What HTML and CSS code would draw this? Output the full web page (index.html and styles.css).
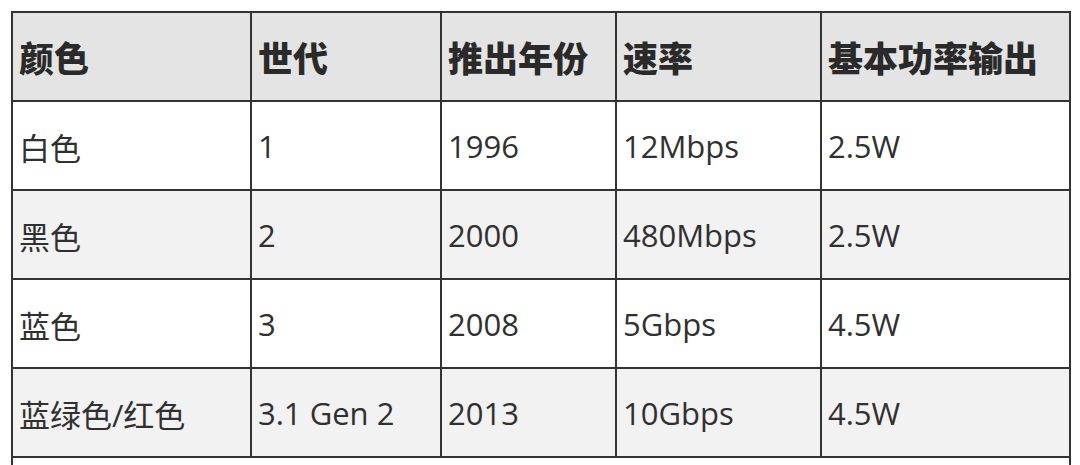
FILE: index.html
```html
<!DOCTYPE html>
<html lang="zh-CN">
<head>
<meta charset="utf-8">
<title>USB</title>
<link rel="stylesheet" href="styles.css">
</head>
<body>
<table class="usb">
  <colgroup>
    <col class="c1"><col class="c2"><col class="c3"><col class="c4"><col class="c5">
  </colgroup>
  <thead>
    <tr class="head"><th>颜色</th><th>世代</th><th>推出年份</th><th>速率</th><th>基本功率输出</th></tr>
  </thead>
  <tbody>
    <tr><td>白色</td><td>1</td><td>1996</td><td>12Mbps</td><td>2.5W</td></tr>
    <tr class="alt"><td>黑色</td><td>2</td><td>2000</td><td>480Mbps</td><td>2.5W</td></tr>
    <tr><td>蓝色</td><td>3</td><td>2008</td><td>5Gbps</td><td>4.5W</td></tr>
    <tr class="alt"><td>蓝绿色/红色</td><td>3.1 Gen 2</td><td>2013</td><td>10Gbps</td><td>4.5W</td></tr>
    <tr><td colspan="5"></td></tr>
  </tbody>
</table>
</body>
</html>
```

FILE: styles.css
```css
html, body {
  overflow: hidden;
  background: #ffffff;
}
body {
  margin: 11px 0 0 11px;
  font-family: "Open Sans", "Noto Sans CJK SC", sans-serif;
  color: #303030;
}
.usb {
  border-collapse: collapse;
  table-layout: fixed;
  width: 1058px;
  border: 2px solid #333333;
}
.c1 { width: 239px; }
.c2 { width: 190px; }
.c3 { width: 175px; }
.c4 { width: 205px; }
.c5 { width: 249px; }
.usb th,
.usb td {
  border: 2px solid #333333;
  padding: 0 6px;
  text-align: left;
  vertical-align: middle;
  white-space: nowrap;
}
.usb tr {
  height: 89px;
}
.usb th {
  font-family: "Noto Sans CJK SC", sans-serif;
  font-weight: 900;
  font-size: 35px;
  color: #2a2a2a;
  background: #e4e4e4;
}
.usb td {
  font-size: 31px;
  font-weight: 400;
  padding-top: 1px;
}
.usb .alt td {
  background: #f2f2f2;
}
```
